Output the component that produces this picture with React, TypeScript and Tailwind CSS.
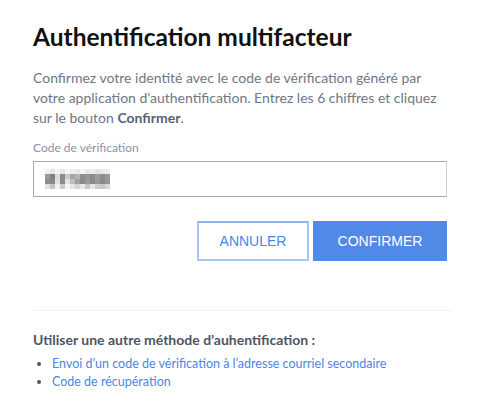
const mosaic = [
  ["#f0f0f0", "#e4e4e4", "#f2f2f2", "#e6e6e6", "#f4f4f4", "#ededed", "#e8e8e8", "#f4f4f4", "#e6e6e6", "#ececec", "#e2e2e2", "#e8e8e8", "#ededed"],
  ["#9a9a9a", "#7f7f7f", "#d8d8d8", "#8a8a8a", "#c8c8c8", "#a5a5a5", "#b4b4b4", "#8c8c8c", "#959595", "#8a8a8a", "#9c9c9c", "#8d8d8d", "#9a9a9a"],
  ["#8c8c8c", "#8a8a8a", "#e0e0e0", "#8a8a8a", "#e2e2e2", "#bdbdbd", "#9e9e9e", "#8a8a8a", "#9a9a9a", "#8a8a8a", "#9a9a9a", "#8a8a8a", "#959595"],
  ["#e0e0e0", "#c4c4c4", "#f2f2f2", "#cccccc", "#f4f4f4", "#e4e4e4", "#d2d2d2", "#e8e8e8", "#c8c8c8", "#e6e6e6", "#cfcfcf", "#c8c8c8", "#d8d8d8"],
];

export default function App() {
  return (
    <div className="min-h-[418px] bg-white px-[33px] pt-[22px] font-['Lato','Noto_Sans',sans-serif]">
      <h1 className="text-[24.5px] font-bold leading-[30px] text-[#111111]">Authentification multifacteur</h1>
      <p className="mt-[16px] text-[14px] leading-[20px] text-[#6f7787]">
        Confirmez votre identité avec le code de vérification généré par votre application d’authentification. Entrez
        les 6 chiffres et cliquez sur le bouton <b className="font-bold text-[#5a6272]">Confirmer</b>.
      </p>

      <label className="mt-[12px] block text-[12px] leading-[16px] text-[#8a93a3]">Code de vérification</label>
      <div className="mt-[5px] flex h-[36px] w-[414px] items-center border border-[#a8a8a8] border-r-[#cfcfcf] px-[11px]">
        <div className="grid grid-cols-[repeat(13,5px)] grid-rows-[repeat(4,5px)]">
          {mosaic.flat().map((c, i) => (
            <div key={i} style={{ backgroundColor: c }} />
          ))}
        </div>
      </div>

      <div className="mt-[24px] flex w-[414px] justify-end gap-[4px] font-['Liberation_Sans',Arial,sans-serif] text-[14px]">
        <button className="h-[40px] w-[112px] border-2 border-[#a9c5f3] border-t-[#8fb3ef] text-[#4a86e8]">ANNULER</button>
        <button className="h-[40px] w-[134px] bg-[#5089e8] text-white">CONFIRMER</button>
      </div>

      <div className="mt-[49px] h-px w-[420px] bg-[#f2f3f5]" />

      <h2 className="mt-[19px] text-[14px] font-bold leading-[20px] text-[#4d5563]">
        Utiliser une autre méthode d’auhentification :
      </h2>
      <ul className="mt-[5px] list-disc pl-[19px] text-[12.5px] leading-[18px] text-[#4a86e8] marker:text-[#555]">
        <li>Envoi d’un code de vérification à l’adresse courriel secondaire</li>
        <li>Code de récupération</li>
      </ul>
    </div>
  );
}
